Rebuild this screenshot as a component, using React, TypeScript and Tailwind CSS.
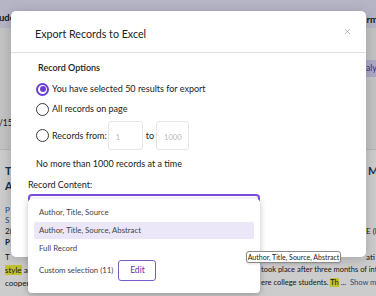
import React from 'react';
import { X } from 'lucide-react';

const Radio = ({ checked }: { checked?: boolean }) =>
  checked ? (
    <span className="w-[13px] h-[13px] rounded-full border-2 border-[#6a3fd0] flex items-center justify-center shrink-0">
      <span className="w-[6px] h-[6px] rounded-full bg-[#6a3fd0]" />
    </span>
  ) : (
    <span className="w-[13px] h-[13px] rounded-full border-[1.5px] border-[#3a3a3a] shrink-0" />
  );

const BackgroundPage = () => (
  <div className="flex flex-col h-full text-[#222]">
    <div className="h-[28px] bg-[#e4e3f8] flex justify-between text-[9.5px] font-bold">
      <span className="pt-[11px] -ml-[1px]">ude</span>
      <span className="pt-[13px] -mr-[2px]">rm</span>
    </div>
    <div className="h-[122px] bg-[#f4f4f4] flex flex-col border-b border-[#e0e0e0]">
      <div className="mt-[32px] ml-auto w-[11px] h-[17px] bg-[#d6d3f7] overflow-hidden text-[8.5px] text-[#4a37b5] flex items-center">
        <span className="pl-[1px]">aly</span>
      </div>
      <div className="mt-auto mb-[19px] text-[8.5px] -ml-[1px]">/15</div>
    </div>
    <div className="flex-1 bg-white flex flex-col pl-[5px] text-[7.5px] whitespace-nowrap overflow-hidden">
      <div className="mt-[13px] flex h-[16px] items-center text-[11px] font-bold text-[#1d3c6b]">
        <span className="w-[363px] shrink-0">T</span>
        <span>M</span>
      </div>
      <div className="h-[15px] flex items-center text-[11px] font-bold text-[#1d3c6b]">A</div>
      <div className="mt-[11px] h-[10px] flex items-center text-[8px] text-[#2a64a8]">P</div>
      <div className="h-[10px] flex items-center text-[8px] text-[#2a64a8]">S</div>
      <div className="h-[11px] flex items-center text-[8px]">
        <span className="w-[361px] shrink-0">2(</span>
        <span>E (I</span>
      </div>
      <div className="h-[12px] flex items-center text-[8px] font-bold">P</div>
      <div className="mt-[2px] h-[13px] flex items-center text-[8px]">
        <span className="w-[361px] shrink-0">T</span>
        <span>ati</span>
      </div>
      <div className="h-[13px] flex items-center">
        <span className="w-[256px] shrink-0 overflow-hidden text-[8px]">
          <span className="bg-[#f2f23a]">style</span> and its relation to group work
        </span>
        <span className="shrink-0">took place after three months of internship</span>
      </div>
      <div className="h-[13px] flex items-center">
        <span className="w-[256px] shrink-0 overflow-hidden text-[8px]">cooperation among the participants, who</span>
        <span className="shrink-0">
          ere college students. <span className="bg-[#f2f23a]">Th</span> ...
          <span className="ml-[4px] text-[#2a64a8]">Show more</span>
        </span>
      </div>
    </div>
  </div>
);

const App = () => {
  return (
    <div className="relative w-[376px] h-[296px] overflow-hidden bg-white font-['Lato',sans-serif]">
      <BackgroundPage />
      <div className="absolute inset-0 bg-black/[0.2]" />

      {/* modal */}
      <div className="absolute left-[11px] top-[11px] w-[355px] h-[246px] bg-white rounded-[5px] shadow-[0_2px_12px_rgba(0,0,0,0.2)] text-[#222]">
        <div className="h-[42px] flex items-center justify-between pl-[24px] pr-[14px] border-b border-[#dedede]">
          <span className="pt-[6px] text-[10.7px]">Export Records to Excel</span>
          <X size={9} strokeWidth={1.5} className="text-[#8a8a8a]" />
        </div>

        <div className="flex flex-col pl-[17px] text-[9px]">
          <div className="pl-[10px] mt-[7px] h-[16px] flex items-center font-semibold">Record Options</div>
          <div className="pl-[8px] flex flex-col">
            <label className="mt-[5px] h-[16px] flex items-center gap-[3px]">
              <Radio checked />
              <span>You have selected 50 results for export</span>
            </label>
            <label className="mt-[4px] h-[16px] flex items-center gap-[3px]">
              <Radio />
              <span>All records on page</span>
            </label>
            <div className="mt-[4px] h-[29px] flex items-center">
              <Radio />
              <span className="ml-[3px]">Records from:</span>
              <div className="ml-[1px] w-[35px] h-[29px] border border-[#e6e6e6] rounded-[3px] flex items-end pl-[7px] pb-[6px] text-[7.5px] text-[#b5b5b5]">1</div>
              <span className="ml-[3px] mr-[2px]">to</span>
              <div className="w-[33px] h-[29px] border border-[#e6e6e6] rounded-[3px] flex items-end pl-[7px] pb-[6px] text-[7.5px] text-[#b5b5b5]">1000</div>
            </div>
            <div className="mt-[6px] h-[16px] flex items-center">No more than 1000 records at a time</div>
          </div>
          <div className="mt-[5px] h-[16px] flex items-center">Record Content:</div>
          <div className="mt-[1px] w-[232px] h-[24px] border-2 border-[#7a4fdc] rounded-[4px]" />
        </div>
      </div>

      {/* open dropdown list */}
      <div className="absolute left-[28px] top-[199px] w-[232px] h-[94px] bg-white rounded-[4px] shadow-[0_2px_6px_rgba(0,0,0,0.25)] flex flex-col px-[6px] text-[7.8px] text-[#444]">
        <div className="mt-[6px] h-[16px] flex items-center pl-[5px]">Author, Title, Source</div>
        <div className="mt-[1px] h-[17px] flex items-center pl-[5px] bg-[#ece7f8] rounded-[2px]">Author, Title, Source, Abstract</div>
        <div className="mt-[1px] h-[17px] flex items-center pl-[5px]">Full Record</div>
        <div className="mt-[3px] flex items-center pl-[5px] gap-[5px]">
          <span>Custom selection (11)</span>
          <button className="w-[38px] h-[21px] border-[1.5px] border-[#7a5cc8] rounded-[3px] text-[8.5px] text-[#5a36b0]">Edit</button>
        </div>
      </div>

      {/* tooltip */}
      <div className="absolute left-[246px] top-[251px] w-[95px] h-[12px] bg-white border border-[#8a8a8a] rounded-[3px] shadow-sm flex items-center justify-center text-[7px] text-[#222] whitespace-nowrap">
        Author, Title, Source, Abstract
      </div>
    </div>
  );
};

export default App;
